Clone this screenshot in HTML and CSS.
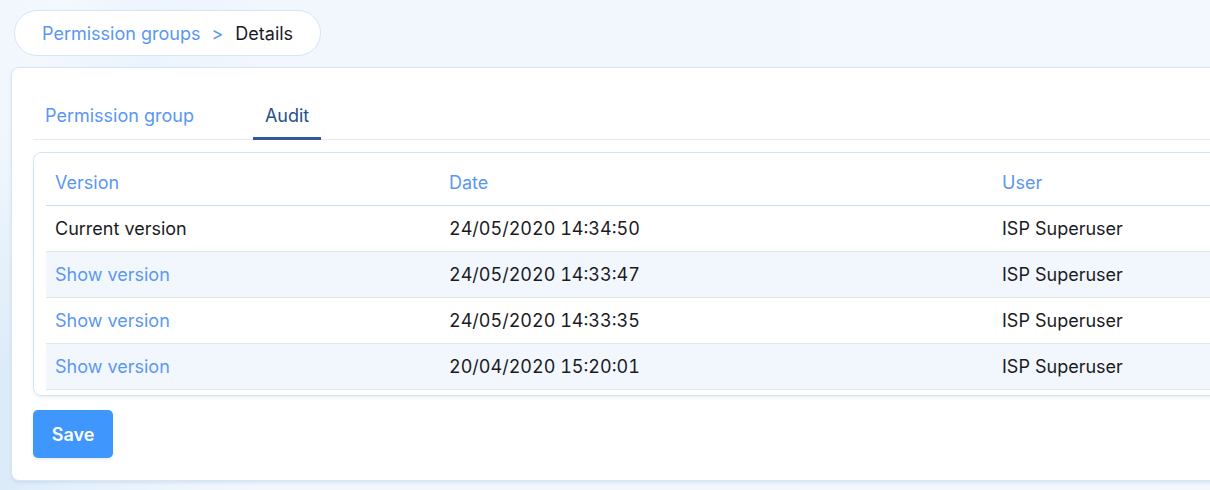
FILE: index.html
```html
<!DOCTYPE html>
<html lang="en">
<head>
<meta charset="utf-8">
<title>Permission groups - Details</title>
<link rel="stylesheet" href="styles.css">
</head>
<body>
<div class="page">
  <nav class="breadcrumb">
    <a class="crumb-link" href="#">Permission groups</a>
    <span class="crumb-sep">&gt;</span>
    <span class="crumb-current">Details</span>
  </nav>
  <section class="card">
    <div class="tabs">
      <div class="tab">Permission group</div>
      <div class="tab tab-active">Audit</div>
    </div>
    <div class="table-box">
      <table class="audit">
        <colgroup>
          <col class="col-version">
          <col class="col-date">
          <col class="col-user">
        </colgroup>
        <thead>
          <tr><th>Version</th><th>Date</th><th>User</th></tr>
        </thead>
        <tbody>
          <tr><td>Current version</td><td class="date">24/05/2020 14:34:50</td><td>ISP Superuser</td></tr>
          <tr class="alt"><td><a href="#" class="link">Show version</a></td><td class="date">24/05/2020 14:33:47</td><td>ISP Superuser</td></tr>
          <tr><td><a href="#" class="link">Show version</a></td><td class="date">24/05/2020 14:33:35</td><td>ISP Superuser</td></tr>
          <tr class="alt"><td><a href="#" class="link">Show version</a></td><td class="date">20/04/2020 15:20:01</td><td>ISP Superuser</td></tr>
        </tbody>
      </table>
    </div>
    <button class="btn-save" type="button">Save</button>
  </section>
</div>
</body>
</html>
```
FILE: styles.css
```css
html, body {
  margin: 0;
  padding: 0;
  height: 100%;
}
body {
  font-family: Inter, "Noto Sans", "Liberation Sans", sans-serif;
  font-size: 18px;
  color: #1b1b1f;
  overflow: hidden;
  background:
    linear-gradient(115deg, rgba(255,255,255,0.6) 0px, rgba(255,255,255,0.6) 60px, rgba(255,255,255,0) 160px),
    linear-gradient(90deg, #dcebf9 0px, #e6f1fb 80px, #f2f7fe 260px, #f3f7fe 100%);
}
.page {
  padding: 10px 0 0 0;
}
.breadcrumb {
  display: inline-flex;
  align-items: center;
  margin-left: 14px;
  height: 42px;
  padding: 2px 27px 0 27px;
  border: 1px solid #d4e6f7;
  border-radius: 23px;
  background: #ffffff;
  font-size: 18px;
  line-height: 20px;
}
.crumb-link {
  color: #5b97f2;
  text-decoration: none;
}
.crumb-sep {
  color: #5b97f2;
  margin: 0 12px 0 11px;
}
.crumb-current {
  color: #1b1b1f;
}
.card {
  margin: 11px 0 0 11px;
  width: 1260px;
  background: #ffffff;
  border: 1px solid #d6e6f5;
  border-radius: 8px;
  padding: 22px 21px 22px 21px;
  box-sizing: border-box;
  box-shadow: 0 2px 3px rgba(150, 180, 210, 0.25);
}
.tabs {
  display: flex;
  border-bottom: 1px solid #e7ebef;
  font-size: 18px;
}
.tab {
  padding: 16px 12px 11px 12px;
  line-height: 20px;
  color: #5b97f2;
  border-bottom: 3px solid transparent;
  margin-bottom: -1px;
}
.tab + .tab {
  margin-left: 47px;
}
.tab-active {
  color: #24508f;
  border-bottom-color: #2c5a9c;
}
.table-box {
  margin-top: 12px;
  border: 1px solid #d2e5f7;
  border-radius: 8px;
  padding: 7px 12px 5px 12px;
  box-shadow: 0 2px 3px rgba(150, 170, 190, 0.15);
}
.audit {
  width: 100%;
  border-collapse: collapse;
  table-layout: fixed;
  font-size: 18px;
}
.col-version { width: 394px; }
.col-date { width: 553px; }
.audit th {
  text-align: left;
  font-weight: 400;
  color: #5b97f2;
  height: 45px;
  padding: 0 9px;
  border-bottom: 1px solid #bddcf7;
}
.audit td {
  height: 45px;
  padding: 0 9px;
  border-bottom: 1px solid #e3e7ec;
  color: #1b1b1f;
}
.audit td.date {
  font-variant-numeric: tabular-nums;
}
.audit tr.alt td {
  background: #f2f7fd;
}
.link {
  color: #5b97f2;
  text-decoration: none;
}
.btn-save {
  margin-top: 14px;
  width: 80px;
  height: 48px;
  border: none;
  border-radius: 5px;
  background: #3f96fd;
  color: #ffffff;
  font-family: Inter, "Noto Sans", "Liberation Sans", sans-serif;
  font-size: 18px;
  font-weight: 600;
  box-shadow: 0 2px 3px rgba(0, 0, 0, 0.08);
  display: block;
}
```
